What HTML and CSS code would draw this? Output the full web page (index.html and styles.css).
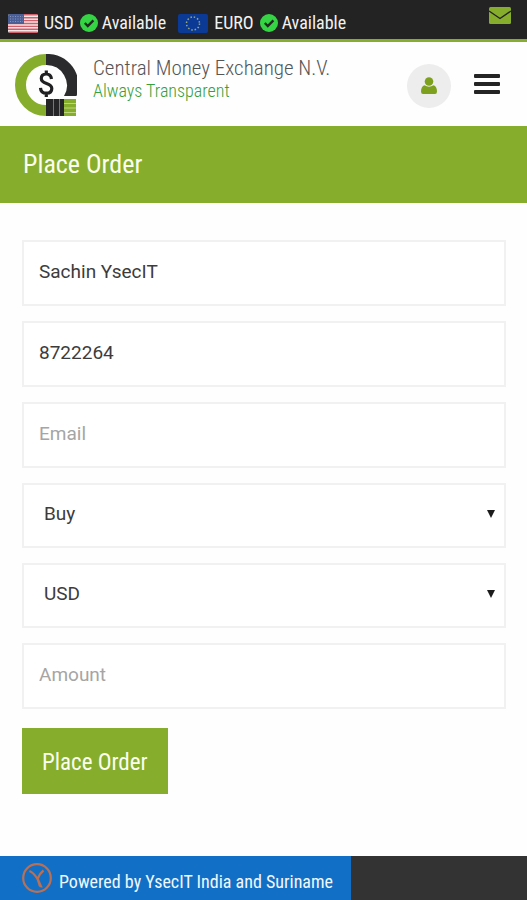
FILE: index.html
```html
<!DOCTYPE html>
<html lang="en">
<head>
<meta charset="utf-8">
<meta name="viewport" content="width=device-width, initial-scale=1">
<title>Place Order - Central Money Exchange N.V.</title>
<link rel="stylesheet" href="styles.css">
</head>
<body>
<div class="topbar">
  <ul class="rates">
    <li class="rate">
      <svg class="flag" viewBox="0 0 30 19" aria-hidden="true">
        <rect width="30" height="19" rx="2" fill="#f3e4e6"/>
        <path d="M1 .8h28M0 3.7h30M0 6.6h30M0 9.5h30M0 12.4h30M0 15.3h30M1 18.2h28" stroke="#d0606c" stroke-width="1.4"/>
        <path d="M2 0h14v10H0V2a2 2 0 0 1 2-2z" fill="#4a5f96"/>
        <path d="M2 2.5h13M2 5h13M2 7.5h13" stroke="#8795bd" stroke-width="1" stroke-dasharray="1 1.5"/>
      </svg>
      <span>USD</span>
      <svg class="check" viewBox="0 0 18 18" aria-hidden="true"><circle cx="9" cy="9" r="9" fill="#35d444"/><path d="M4.8 9l3 3 5.600-5.600" fill="none" stroke="#1f2a20" stroke-width="2.400"/></svg>
      <span class="state">Available</span>
    </li>
    <li class="rate">
      <svg class="flag" viewBox="0 0 30 19" aria-hidden="true">
        <rect width="30" height="19" rx="2" fill="#0b3a96"/>
        <circle cx="15" cy="9.500" r="6.500" fill="none" stroke="#9aa777" stroke-width="1.500" stroke-dasharray="1.500 1.903"/>
      </svg>
      <span>EURO</span>
      <svg class="check" viewBox="0 0 18 18" aria-hidden="true"><circle cx="9" cy="9" r="9" fill="#35d444"/><path d="M4.800 9l3 3 5.600-5.600" fill="none" stroke="#1f2a20" stroke-width="2.400"/></svg>
      <span class="state">Available</span>
    </li>
  </ul>
  <a class="mail" href="#" aria-label="Email us">
    <svg viewBox="0 0 22 17" aria-hidden="true"><rect width="22" height="17" rx="1.500" fill="#86ae2c"/><path d="M0 4l11 7.500L22 4" fill="none" stroke="#232323" stroke-width="1.400"/></svg>
  </a>
</div>
<header class="header">
  <a class="brand" href="#">
    <svg class="logo" viewBox="0 0 62 62" aria-hidden="true">
      <path d="M31 5.500a25.500 25.500 0 0 0 0 51" fill="none" stroke="#86ae2c" stroke-width="11"/>
      <path d="M31 0A31 31 0 0 1 61.500 42H49A20.500 20.500 0 0 0 31 11z" fill="#2b2b2d"/>
      <rect x="31" y="45" width="18" height="17" fill="#252527"/>
      <path d="M38.500 45v17M44.500 45v17" stroke="#77777b" stroke-width="1"/>
      <rect x="49" y="45" width="12" height="17" fill="#86ae2c"/>
      <path d="M49 49.500h12M49 54h12M49 58.500h12" stroke="#bdd57d" stroke-width="1"/>
      <path d="M36.500 25c-.5-3.500-2.500-5-5.200-5-3.200 0-5 1.800-5 4.500 0 6.300 10.500 3.700 10.500 10 0 2.800-2 4.700-5.300 4.700-3.600 0-5.800-1.800-6-5.400M31.300 16.500v4M31.300 39v4" fill="none" stroke="#202022" stroke-width="3.200"/>
    </svg>
    <span class="brand-text">
      <span class="name">Central Money Exchange N.V.</span>
      <span class="tagline">Always Transparent</span>
    </span>
  </a>
  <div class="actions">
    <a class="account" href="#" aria-label="My account">
      <svg viewBox="0 0 16 18" aria-hidden="true"><circle cx="8" cy="4.500" r="4.300" fill="#7da11f"/><path d="M3.500 8.300Q8 11 12.500 8.300 16 9.500 16 14.500q0 2.500-2 2.500H2q-2 0-2-2.500 0-5 3.500-6.200z" fill="#7da11f"/></svg>
    </a>
    <button class="menu" type="button" aria-label="Menu"><span></span><span></span><span></span></button>
  </div>
</header>
<div class="banner"><h1>Place Order</h1></div>
<main>
  <form class="order">
    <input type="text" aria-label="Name" value="Sachin YsecIT">
    <input type="tel" aria-label="Phone" value="8722264">
    <input type="email" aria-label="Email" placeholder="Email">
    <div class="select">
      <select aria-label="Order type"><option>Buy</option><option>Sell</option></select>
      <svg class="arrow" viewBox="0 0 8 8" aria-hidden="true"><path d="M0 0h8L4 8z" fill="#1c1c1c"/></svg>
    </div>
    <div class="select">
      <select aria-label="Currency"><option>USD</option><option>EURO</option></select>
      <svg class="arrow" viewBox="0 0 8 8" aria-hidden="true"><path d="M0 0h8L4 8z" fill="#1c1c1c"/></svg>
    </div>
    <input type="text" inputmode="decimal" aria-label="Amount" placeholder="Amount">
    <button class="submit" type="submit">Place Order</button>
  </form>
</main>
<footer class="footer">
  <a class="powered" href="#">
    <svg viewBox="0 0 30 30" aria-hidden="true"><circle cx="15" cy="15" r="13.800" fill="none" stroke="#b97055" stroke-width="2.200"/><path d="M7.500 8q4 1.500 8 8M21.500 7.500q-4 3-6 8.500" fill="none" stroke="#b97055" stroke-width="2.200"/><path d="M14.300 15.500h2.400l4 9q-3 .3-4-1.500z" fill="#b97055"/></svg>
    <span>Powered by YsecIT India and Suriname</span>
  </a>
</footer>
</body>
</html>
```
FILE: styles.css
```css
* { box-sizing: border-box; }

body {
  margin: 0;
  min-height: 100vh;
  display: flex;
  flex-direction: column;
  background: #fefefe;
  color: #3c3c3c;
  font-family: "Roboto Condensed", Roboto, sans-serif;
}

a { color: inherit; text-decoration: none; }
svg { display: block; flex: none; }

.topbar {
  display: flex;
  justify-content: space-between;
  height: 42px;
  padding: 0 16px 0 8px;
  background: #232323;
  border-bottom: 3px solid #86ae2c;
}
.rates {
  display: flex;
  gap: 12px;
  margin: 0;
  padding: 7px 0 0;
  list-style: none;
  color: #f2f2f2;
  font-size: 18px;
  line-height: 32px;
}
.rate { display: flex; align-items: center; gap: 6px; }
.flag { width: 30px; height: 19px; }
.check { width: 18px; height: 18px; }
.state { margin-left: -2px; }
.mail { padding-top: 7px; }
.mail svg { width: 22px; height: 17px; }

.header {
  display: flex;
  justify-content: space-between;
  height: 84px;
  padding: 12px 27px 0 15px;
}
.brand { display: flex; gap: 16px; }
.logo { width: 62px; height: 62px; }
.brand-text { display: flex; flex-direction: column; }
.name { font-size: 21px; line-height: 28px; font-weight: 300; color: #555; }
.tagline { font-size: 18px; line-height: 18px; font-weight: 300; color: #36a03a; }
.actions { display: flex; align-items: flex-start; gap: 23px; padding-top: 10px; }
.account {
  display: grid;
  place-items: center;
  width: 44px;
  height: 44px;
  border-radius: 50%;
  background: #ededed;
}
.account svg { width: 16px; height: 18px; }
.menu {
  display: flex;
  flex-direction: column;
  gap: 4px;
  margin-top: 10px;
  padding: 0;
  border: 0;
  background: none;
}
.menu span { width: 26px; height: 4px; border-radius: 1px; background: #242424; }

.banner { padding: 21px 23px; background: #86ae2c; }
.banner h1 { margin: 0; font-size: 26px; line-height: 35px; font-weight: 400; color: #fafff0; }

main { flex: 1; padding: 37px 21px 20px 22px; }
.order { display: flex; flex-direction: column; gap: 15px; }
.order input, .order select {
  display: block;
  width: 100%;
  height: 66px;
  padding: 0 15px 4px;
  border: 2px solid #f1f1f1;
  border-radius: 0;
  background: #fff;
  color: #3c3c3c;
  font-family: Roboto, sans-serif;
  font-size: 19px;
}
.order input::placeholder { color: #a5a5a5; opacity: 1; }
.order select { height: 65px; padding: 0 20px 4px; appearance: none; }
.select { position: relative; }
.arrow { position: absolute; right: 11px; top: 27px; width: 8px; height: 8px; pointer-events: none; }
.order .submit {
  align-self: flex-start;
  height: 66px;
  margin-top: 4px;
  padding: 2px 20px 0;
  border: 0;
  background: #86ae2c;
  color: #fafff0;
  font-family: inherit;
  font-size: 23px;
}

.footer { display: flex; height: 44px; background: #333; }
.powered {
  display: flex;
  align-items: center;
  gap: 7px;
  padding: 0 18px 0 22px;
  background: #1170c6;
  color: #f2f7fb;
  font-size: 18px;
}
.powered svg { width: 30px; height: 30px; }
.powered span { padding-top: 6px; }
```
